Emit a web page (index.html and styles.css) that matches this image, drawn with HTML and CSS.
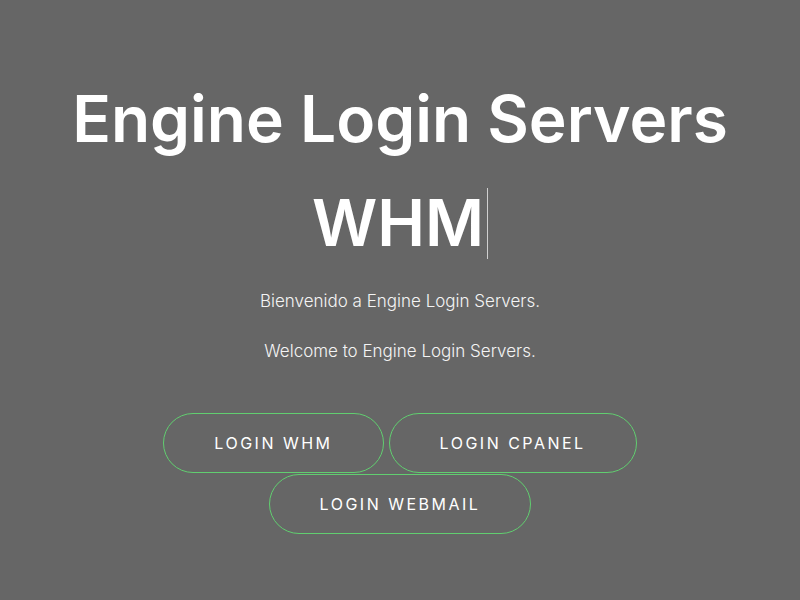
FILE: index.html
```html
<!DOCTYPE html>
<html lang="es">
<head>
<meta charset="utf-8">
<title>Engine Login Servers</title>
<link rel="stylesheet" href="styles.css">
</head>
<body>
<main class="hero">
  <h1 class="title">Engine Login Servers</h1>
  <h2 class="typed"><span class="typed-text">WHM</span><span class="caret"></span></h2>
  <p class="lead">Bienvenido a Engine Login Servers.</p>
  <p class="lead">Welcome to Engine Login Servers.</p>
  <div class="buttons">
    <a class="btn" href="#">Login WHM</a>
    <a class="btn" href="#">Login cPanel</a>
    <a class="btn" href="#">Login Webmail</a>
  </div>
</main>
</body>
</html>
```

FILE: styles.css
```css
html, body {
  margin: 0;
  padding: 0;
  height: 100%;
  background: #666666;
}
body {
  font-family: Inter, "DejaVu Sans", sans-serif;
  color: #ffffff;
}
.hero {
  display: flex;
  flex-direction: column;
  align-items: center;
  padding-top: 79px;
  text-align: center;
}
.title {
  margin: 0;
  font-size: 64px;
  font-weight: 600;
  line-height: 80px;
  letter-spacing: 0;
}
.typed {
  margin: 24px 0 0;
  font-size: 64px;
  font-weight: 600;
  line-height: 80px;
  display: flex;
  align-items: center;
}
.caret {
  display: inline-block;
  width: 1px;
  height: 71px;
  margin-left: 3px;
  background: #cfcfcf;
}
.lead {
  margin: 0;
  font-size: 17px;
  font-weight: 300;
  line-height: 50px;
  color: #f4f4f4;
}
.lead:first-of-type {
  margin-top: 13px;
}
.buttons {
  margin-top: 37px;
  width: 480px;
  display: flex;
  flex-wrap: wrap;
  justify-content: center;
  column-gap: 5px;
  row-gap: 1px;
}
.btn {
  display: inline-block;
  padding: 19px 50px;
  border: 1px solid #61ce70;
  border-radius: 30px;
  color: #ffffff;
  text-decoration: none;
  text-transform: uppercase;
  font-size: 16px;
  line-height: 20px;
  letter-spacing: 2.5px;
}
```
